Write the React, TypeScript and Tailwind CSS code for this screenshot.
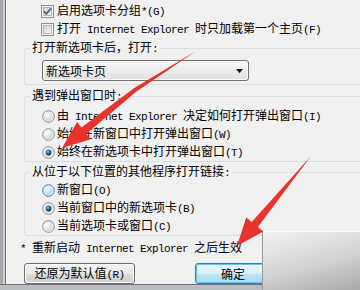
import React from "react";

const mono = "font-['Liberation_Mono',monospace] text-[11px] tracking-[-0.6px]";

// SimSun-like mixed text: ASCII runs are half width, CJK full width
function Txt({ s }: { s: string }) {
  const parts = s.match(/[\x00-\x7f]+|[^\x00-\x7f]+/g) ?? [];
  return (
    <span className="whitespace-pre">
      {parts.map((p, i) =>
        /^[\x00-\x7f]/.test(p) ? (
          <span key={i} className={mono}>
            {p}
          </span>
        ) : (
          <span key={i}>{p}</span>
        )
      )}
    </span>
  );
}

function CheckBox({ checked }: { checked?: boolean }) {
  return (
    <svg width="13" height="13" viewBox="0 0 13 13" className="shrink-0">
      <defs>
        <linearGradient id="cbIn" x1="0" y1="0" x2="1" y2="1">
          <stop offset="0" stopColor="#cdd1d7" />
          <stop offset="1" stopColor="#f7f7f7" />
        </linearGradient>
      </defs>
      <rect x="0.5" y="0.5" width="12" height="12" fill="#f5f5f5" stroke="#8e8f8f" />
      <rect x="2.5" y="2.5" width="8" height="8" fill="url(#cbIn)" stroke="#b2b6bc" />
      {checked && (
        <path d="M3 6.3 L5.4 8.8 L10 3.4" stroke="#4a5f8a" strokeWidth="1.8" fill="none" />
      )}
    </svg>
  );
}

function Radio({ checked, hover, id }: { checked?: boolean; hover?: boolean; id: string }) {
  return (
    <svg width="13" height="13" viewBox="0 0 13 13" className="shrink-0">
      <defs>
        <radialGradient id={`rin-${id}`} cx="0.35" cy="0.3" r="0.8">
          <stop offset="0" stopColor={hover ? "#f2fbff" : "#ffffff"} />
          <stop offset="1" stopColor={hover ? "#9dd5f3" : "#c9ccd1"} />
        </radialGradient>
        <radialGradient id={`rdot-${id}`} cx="0.4" cy="0.35" r="0.7">
          <stop offset="0" stopColor="#8ac0e8" />
          <stop offset="0.5" stopColor="#2a69a6" />
          <stop offset="1" stopColor="#0c2f5c" />
        </radialGradient>
      </defs>
      <circle cx="6.5" cy="6.5" r="5.8" fill={hover ? "#def2fc" : "#f2f2f2"} stroke={hover ? "#3c7fb1" : "#8e8f8f"} />
      <circle cx="6.5" cy="6.5" r="4.2" fill={`url(#rin-${id})`} />
      {checked && <circle cx="6.5" cy="6.5" r="2.9" fill={`url(#rdot-${id})`} />}
    </svg>
  );
}

function Group({ title, children, className }: { title: string; children: React.ReactNode; className: string }) {
  return (
    <fieldset className={`w-[350px] shrink-0 rounded-[3px] border border-[#d5dfe5] ${className}`}>
      <legend className="ml-[5px] px-[2px] leading-[16px]">
        <Txt s={title} />
      </legend>
      <div className="pl-[17px]">{children}</div>
    </fieldset>
  );
}

function RadioRow({ label, checked, hover, id }: { label: string; checked?: boolean; hover?: boolean; id: string }) {
  return (
    <div className="flex h-[18px] items-center gap-[2px]">
      <Radio checked={checked} hover={hover} id={id} />
      <Txt s={label} />
    </div>
  );
}

export default function App() {
  return (
    <div className="relative h-[290px] w-[360px] overflow-hidden bg-[#f0f0f0] font-['Noto_Sans_CJK_SC',sans-serif] text-[12px] leading-[16px] text-black">
      <div className="flex h-[284px]">
        <div className="flex w-[7px] shrink-0">
          <div className="w-[3px] bg-[#a4a7ab]" />
          <div className="w-[2px] bg-[#cdd0d3]" />
          <div className="w-[1px] bg-[#6d7074]" />
          <div className="w-[1px] bg-[#fcfcfc]" />
        </div>

        <div className="flex min-w-0 flex-col pl-[17px] pt-[2px]">
          <div className="flex h-[18px] items-center gap-[3px] pl-[17px]">
            <CheckBox checked />
            <Txt s="启用选项卡分组*(G)" />
          </div>
          <div className="flex h-[18px] items-center gap-[3px] pl-[17px]">
            <CheckBox />
            <Txt s="打开 Internet Explorer 时只加载第一个主页(F)" />
          </div>

          <Group title="打开新选项卡后，打开:" className="mt-[1px] pb-[3px]">
            <div className="mt-[3px] flex h-[21px] w-[207px] items-center justify-between rounded-[3px] border border-[#707070] bg-[linear-gradient(#f8f8f8,#ececec_50%,#dedede)] pl-[3px] pr-[5px] shadow-[inset_0_0_0_1px_#fbfbfb]">
              <span>新选项卡页</span>
              <svg width="7" height="4" viewBox="0 0 7 4">
                <path d="M0 0 H7 L3.5 4 Z" fill="#000" />
              </svg>
            </div>
          </Group>

          <Group title="遇到弹出窗口时:" className="mt-[2px] pt-[2px]">
            <RadioRow id="p1" label="由 Internet Explorer 决定如何打开弹出窗口(I)" />
            <RadioRow id="p2" label="始终在新窗口中打开弹出窗口(W)" />
            <RadioRow id="p3" label="始终在新选项卡中打开弹出窗口(T)" checked />
          </Group>

          <Group title="从位于以下位置的其他程序打开链接:" className="mt-[1px]">
            <RadioRow id="l1" label="新窗口(O)" hover />
            <RadioRow id="l2" label="当前窗口中的新选项卡(B)" checked />
            <RadioRow id="l3" label="当前选项卡或窗口(C)" />
          </Group>

          <div className="-ml-[4px] mt-[3px] flex h-[18px] items-center">
            <Txt s="* 重新启动 Internet Explorer 之后生效" />
          </div>

          <div className="mt-[6px] flex gap-[60px]">
            <button className="flex h-[21px] w-[111px] items-center justify-center rounded-[3px] border border-[#707070] bg-[linear-gradient(#f2f2f2,#ebebeb_50%,#dddddd_50%,#cfcfcf)] shadow-[inset_0_0_0_1px_#fcfcfc]">
              <Txt s="还原为默认值(R)" />
            </button>
            <button className="flex h-[21px] w-[76px] shrink-0 items-center justify-center rounded-[3px] border border-[#3c7fb1] bg-[linear-gradient(#eaf6fd,#d9f0fc_50%,#bee6fd_50%,#a7d9f5)] shadow-[inset_0_0_0_1px_#5ec4ef]">
              <Txt s="确定" />
            </button>
          </div>
        </div>
      </div>

      <div className="h-[6px] border-t border-[#6d7074] bg-[#b9bdc2]" />

      {/* another window lying over the corner */}
      <div className="absolute bottom-0 left-[262px] right-0 top-[231px] border-l border-t border-l-[#9a9a9a] border-t-[#fafafa] bg-[linear-gradient(165deg,#f2f2f2,#d2d2d2_55%,#a9a9a9)]" />

      {/* red annotation arrows */}
      <svg className="pointer-events-none absolute left-0 top-0" width="360" height="290" viewBox="0 0 360 290">
        <polygon
          points="196,51 136.1,91.7 86.4,133.7 90.7,139.2 62,148 77.1,122 81.4,127.5 133.9,88.3"
          fill="#e8322c"
        />
        <polygon
          points="311,156 257.9,226.9 263.3,231.4 237,246 246.3,217.4 251.7,221.9"
          fill="#e8322c"
        />
      </svg>
    </div>
  );
}
